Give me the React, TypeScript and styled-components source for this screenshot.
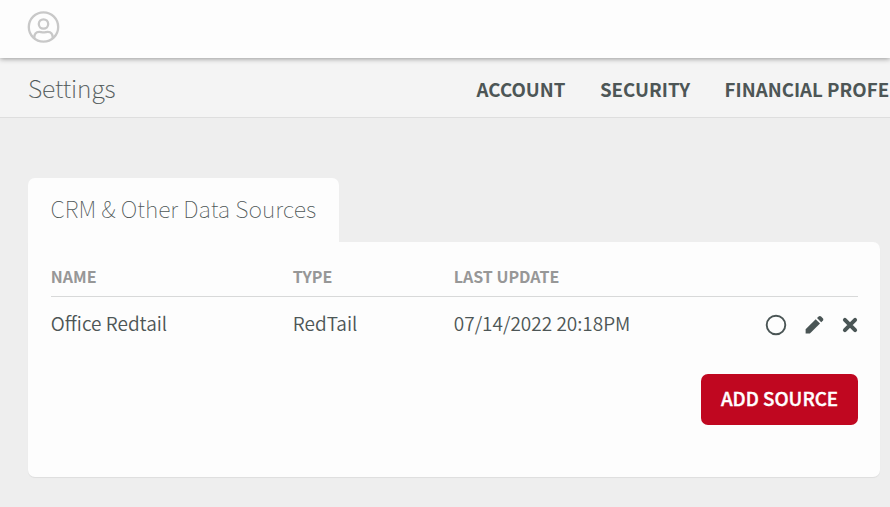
import React from "react";
import styled, { createGlobalStyle } from "styled-components";

const GlobalStyle = createGlobalStyle`
  * { box-sizing: border-box; }
  body {
    margin: 0;
    overflow: hidden;
    background: #eeeeee;
    color: #4d5656;
    font-family: "Noto Sans CJK SC", "Noto Sans", sans-serif;
  }
`;

const Page = styled.div`
  height: 507px;
  display: flex;
  flex-direction: column;
  overflow: hidden;
`;

const TopBar = styled.header`
  position: relative;
  z-index: 1;
  flex: none;
  height: 58px;
  padding: 11px 27px;
  background: #fdfdfd;
  box-shadow: 0 1px 5px rgba(0, 0, 0, 0.38);
`;

const SubHeader = styled.div`
  flex: none;
  height: 60px;
  display: flex;
  align-items: center;
  padding: 3px 0 0 28px;
  background: #f4f4f4;
  border-bottom: 1px solid #dedede;
  white-space: nowrap;
`;

const Title = styled.h1`
  margin: 0;
  width: 448.6px;
  flex: none;
  padding-bottom: 4px;
  font-size: 24.8px;
  font-weight: 100;
  -webkit-text-stroke: 0.2px currentColor;
  line-height: 36px;
`;

const Nav = styled.nav`
  display: flex;
  gap: 34.5px;
`;

const NavLink = styled.a`
  flex: none;
  font-size: 18.7px;
  font-weight: 700;
  line-height: 28px;
`;

const Main = styled.main`
  padding: 60px 10px 0 28px;
`;

const Tab = styled.div`
  width: 311px;
  height: 64px;
  padding: 12px 22.5px 0;
  border-radius: 7px 7px 0 0;
  background: #fdfdfd;
`;

const TabTitle = styled.h2`
  margin: 0;
  font-size: 23.1px;
  font-weight: 100;
  line-height: 36px;
  white-space: nowrap;
`;

const Card = styled.section`
  height: 235px;
  padding: 22px 22px 0 23px;
  border-radius: 0 7px 7px 7px;
  background: #fdfdfd;
  box-shadow: 0 1px 1px rgba(0, 0, 0, 0.07);
`;

const Row = styled.div<{ $head?: boolean }>`
  display: grid;
  grid-template-columns: 242px 161px 1fr auto;
  align-items: center;
  height: ${(p) => (p.$head ? 33 : 55)}px;
  padding-bottom: ${(p) => (p.$head ? 8 : 0)}px;
  border-bottom: ${(p) => (p.$head ? "1px solid #d8d9d9" : "0")};
`;

const HeadCell = styled.span`
  margin-left: -0.2px;
  color: #979797;
  font-size: 16px;
  font-weight: 700;
  line-height: 24px;
`;

const Cell = styled.span`
  margin-left: -0.2px;
  padding-bottom: 3px;
  font-size: 19px;
  font-weight: 350;
  line-height: 28px;
`;

const Actions = styled.div`
  display: flex;
  align-items: center;
`;

const ActionIcon = styled.svg<{ $gap?: number }>`
  display: block;
  margin-left: ${(p) => p.$gap ?? 0}px;
`;

const Footer = styled.div`
  display: flex;
  justify-content: flex-end;
  padding-top: 22px;
`;

const AddButton = styled.button`
  width: 157px;
  height: 51px;
  padding: 0 0 4px;
  border: 0;
  border-radius: 7px;
  background: #c00720;
  color: #ffffff;
  font-family: inherit;
  font-size: 18.8px;
  font-weight: 500;
  -webkit-text-stroke: 0.4px currentColor;
  white-space: nowrap;
`;

export default function App() {
  return (
    <Page>
      <GlobalStyle />
      <TopBar>
        <svg width="33" height="33" viewBox="0 0 33 33" fill="none" stroke="#c8c8c8" strokeWidth="2.3">
          <circle cx="16.5" cy="16" r="14.7" />
          <circle cx="16.5" cy="13" r="4.7" />
          <path d="M7.2 27.2c0-4.200 2-6.400 5-6.400 1.600 0 2.300.6 4.300.6s2.700-.6 4.300-.6c3 0 5 2.200 5 6.400" />
        </svg>
      </TopBar>
      <SubHeader>
        <Title>Settings</Title>
        <Nav>
          <NavLink>ACCOUNT</NavLink>
          <NavLink>SECURITY</NavLink>
          <NavLink>FINANCIAL PROFE</NavLink>
        </Nav>
      </SubHeader>
      <Main>
        <Tab>
          <TabTitle>CRM &amp; Other Data Sources</TabTitle>
        </Tab>
        <Card>
          <Row $head>
            <HeadCell>NAME</HeadCell>
            <HeadCell>TYPE</HeadCell>
            <HeadCell>LAST UPDATE</HeadCell>
          </Row>
          <Row>
            <Cell>Office Redtail</Cell>
            <Cell>RedTail</Cell>
            <Cell>07/14/2022 20:18PM</Cell>
            <Actions>
              <ActionIcon width="22" height="22" viewBox="0 0 22 22">
                <circle cx="11" cy="11" r="9.3" fill="none" stroke="#4a5555" strokeWidth="1.9" />
              </ActionIcon>
              <ActionIcon $gap={18} width="19" height="20" viewBox="0 0 19 20" fill="#4a5555">
                <path d="M.6 14.300 10.700 4.200l4.300 4.300L4.900 18.600H.6z" />
                <path d="m12 3.100 1.600-1.600c.7-.7 1.800-.7 2.500 0l1.700 1.700c.7.700.7 1.800 0 2.500L16.200 7.300z" />
              </ActionIcon>
              <ActionIcon $gap={18} width="16" height="16" viewBox="0 0 16 16">
                <path d="M2.900 2.900 13.100 13.100M13.100 2.900 2.900 13.100" stroke="#4a5555" strokeWidth="4" strokeLinecap="round" />
              </ActionIcon>
            </Actions>
          </Row>
          <Footer>
            <AddButton>ADD SOURCE</AddButton>
          </Footer>
        </Card>
      </Main>
    </Page>
  );
}
